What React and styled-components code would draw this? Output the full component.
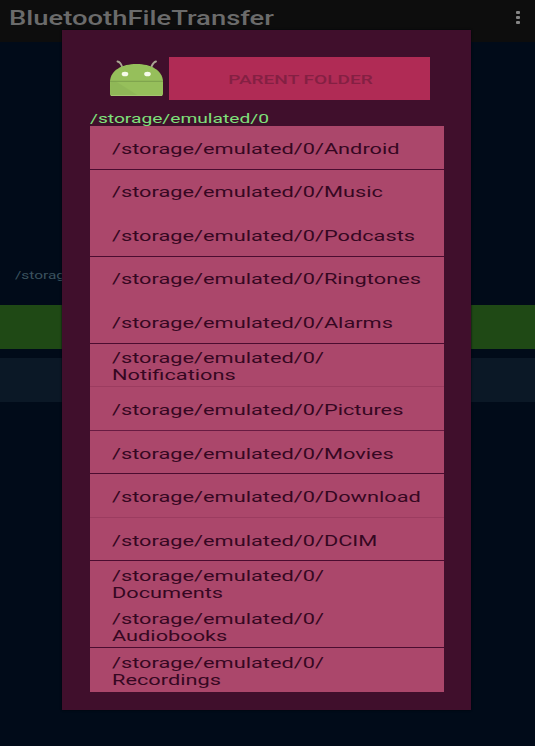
import React from 'react';
import styled, { createGlobalStyle } from 'styled-components';

const GlobalStyle = createGlobalStyle`
  * { box-sizing: border-box; }
  body { margin: 0; background: #010b19; font-family: Roboto, "Liberation Sans", sans-serif; }
`;

const Screen = styled.div`
  position: relative;
  width: 535px;
  height: 746px;
  overflow: hidden;
  background: #010b19;
`;

const Wide = styled.span`
  display: inline-block;
  white-space: pre;
  transform: scaleX(${(p) => p.$x});
  transform-origin: ${(p) => p.$origin || 'left'} center;
`;

const AppBar = styled.header`
  display: flex;
  align-items: center;
  justify-content: space-between;
  height: 42px;
  padding: 0 15px 7px 9px;
  background: #0d0d0d;
`;

const Title = styled.h1`
  margin: 2px 0 0;
  font-size: 19.5px;
  line-height: 22px;
  font-weight: 500;
  color: #6b6b6b;
`;

const MenuDots = styled.div`
  display: flex;
  flex-direction: column;
  gap: 2px;
`;

const Dot = styled.i`
  width: 4.5px;
  height: 3.3px;
  border-radius: 1px;
  background: #858585;
`;

const PathLabel = styled.div`
  height: 20px;
  margin-top: 223px;
  padding-left: 15px;
  font-size: 11.5px;
  line-height: 20px;
  color: #3b525e;
`;

const Band = styled.div`
  height: 44px;
  margin-top: ${(p) => p.$gap}px;
  background: ${(p) => p.$color};
`;

const Dialog = styled.section`
  position: absolute;
  left: 62px;
  top: 30px;
  width: 409px;
  height: 680px;
  padding: 27px 27px 18px 28px;
  background: #400f2c;
  box-shadow: 0 0 2px #00050c;
`;

const DialogHeader = styled.div`
  display: flex;
  height: 43px;
  padding: 0 14px 0 17px;
`;

const IconBox = styled.div`
  width: 62px;
  height: 43px;
  flex: none;
`;

const ParentButton = styled.button`
  flex: 1;
  display: flex;
  align-items: center;
  justify-content: center;
  border: 0;
  padding: 2px 0 0 1px;
  background: #b02b55;
  color: #842043;
  font: 500 12px Roboto, sans-serif;
`;

const CurrentPath = styled.div`
  height: 26px;
  padding: 9px 0 0;
  font-size: 12.5px;
  line-height: 20px;
  color: #7fe07b;
`;

const FolderList = styled.ul`
  display: grid;
  grid-template-rows: repeat(13, 1fr);
  height: 566px;
  margin: 0;
  padding: 0;
  list-style: none;
  background: #ab476b;
`;

const FolderRow = styled.li`
  display: flex;
  align-items: center;
  min-height: 0;
  padding: 3px 0 0 21.5px;
  font-size: 14.3px;
  line-height: 17px;
  color: #360722;
  box-shadow: inset 0 -1px 0 ${(p) => p.$line};
`;

const DARK = '#4b0c30';
const SOFT = '#9c3c60';
const NONE = 'transparent';
const ROOT = '/storage/emulated/0/';

const folders = [
  ['Android', DARK],
  ['Music', NONE],
  ['Podcasts', DARK],
  ['Ringtones', NONE],
  ['Alarms', DARK],
  ['\nNotifications', SOFT],
  ['Pictures', '#681b42'],
  ['Movies', DARK],
  ['Download', SOFT],
  ['DCIM', DARK],
  ['\nDocuments', NONE],
  ['\nAudiobooks', DARK],
  ['\nRecordings', NONE],
];

function AndroidHead() {
  return (
    <svg width="62" height="43" viewBox="0 0 62 43">
      <path d="M10.500 4.500Q13.500 5 15 9.500M49 4.500Q46.500 5 44.500 9.500" fill="none" stroke="#a9a592" strokeWidth="1.900" strokeLinecap="round" />
      <path d="M3 24C4 13 15 7 29.500 7S55 13 56 24V37Q56 39 54 39H5Q3 39 3 37Z" fill="#96bf5b" />
      <path d="M3.500 24.500H9L31 38.500H5Q3 38.500 3 37Z" fill="#8ab355" opacity=".6" />
      <path d="M3 24.300H56" stroke="#7b9f4c" strokeWidth="1" />
      <path d="M4 38.500H55" stroke="#a5c66f" strokeWidth="1" />
      <ellipse cx="18" cy="17" rx="3.300" ry="2.300" fill="#f6fbe9" />
      <ellipse cx="40.500" cy="17" rx="3.300" ry="2.300" fill="#f6fbe9" />
    </svg>
  );
}

export default function App() {
  return (
    <Screen>
      <GlobalStyle />
      <AppBar>
        <Title><Wide $x={1.405}>BluetoothFileTransfer</Wide></Title>
        <MenuDots><Dot /><Dot /><Dot /></MenuDots>
      </AppBar>
      <PathLabel><Wide $x={1.34}>/storag</Wide></PathLabel>
      <Band $gap={20} $color="#1f4915" />
      <Band $gap={9} $color="#0b1826" />
      <Dialog>
        <DialogHeader>
          <IconBox><AndroidHead /></IconBox>
          <ParentButton><Wide $x={1.59} $origin="center">PARENT FOLDER</Wide></ParentButton>
        </DialogHeader>
        <CurrentPath><Wide $x={1.535}>/storage/emulated/0</Wide></CurrentPath>
        <FolderList>
          {folders.map(([name, line]) => (
            <FolderRow key={name} $line={line}>
              <Wide $x={1.522}>{ROOT + name}</Wide>
            </FolderRow>
          ))}
        </FolderList>
      </Dialog>
    </Screen>
  );
}
